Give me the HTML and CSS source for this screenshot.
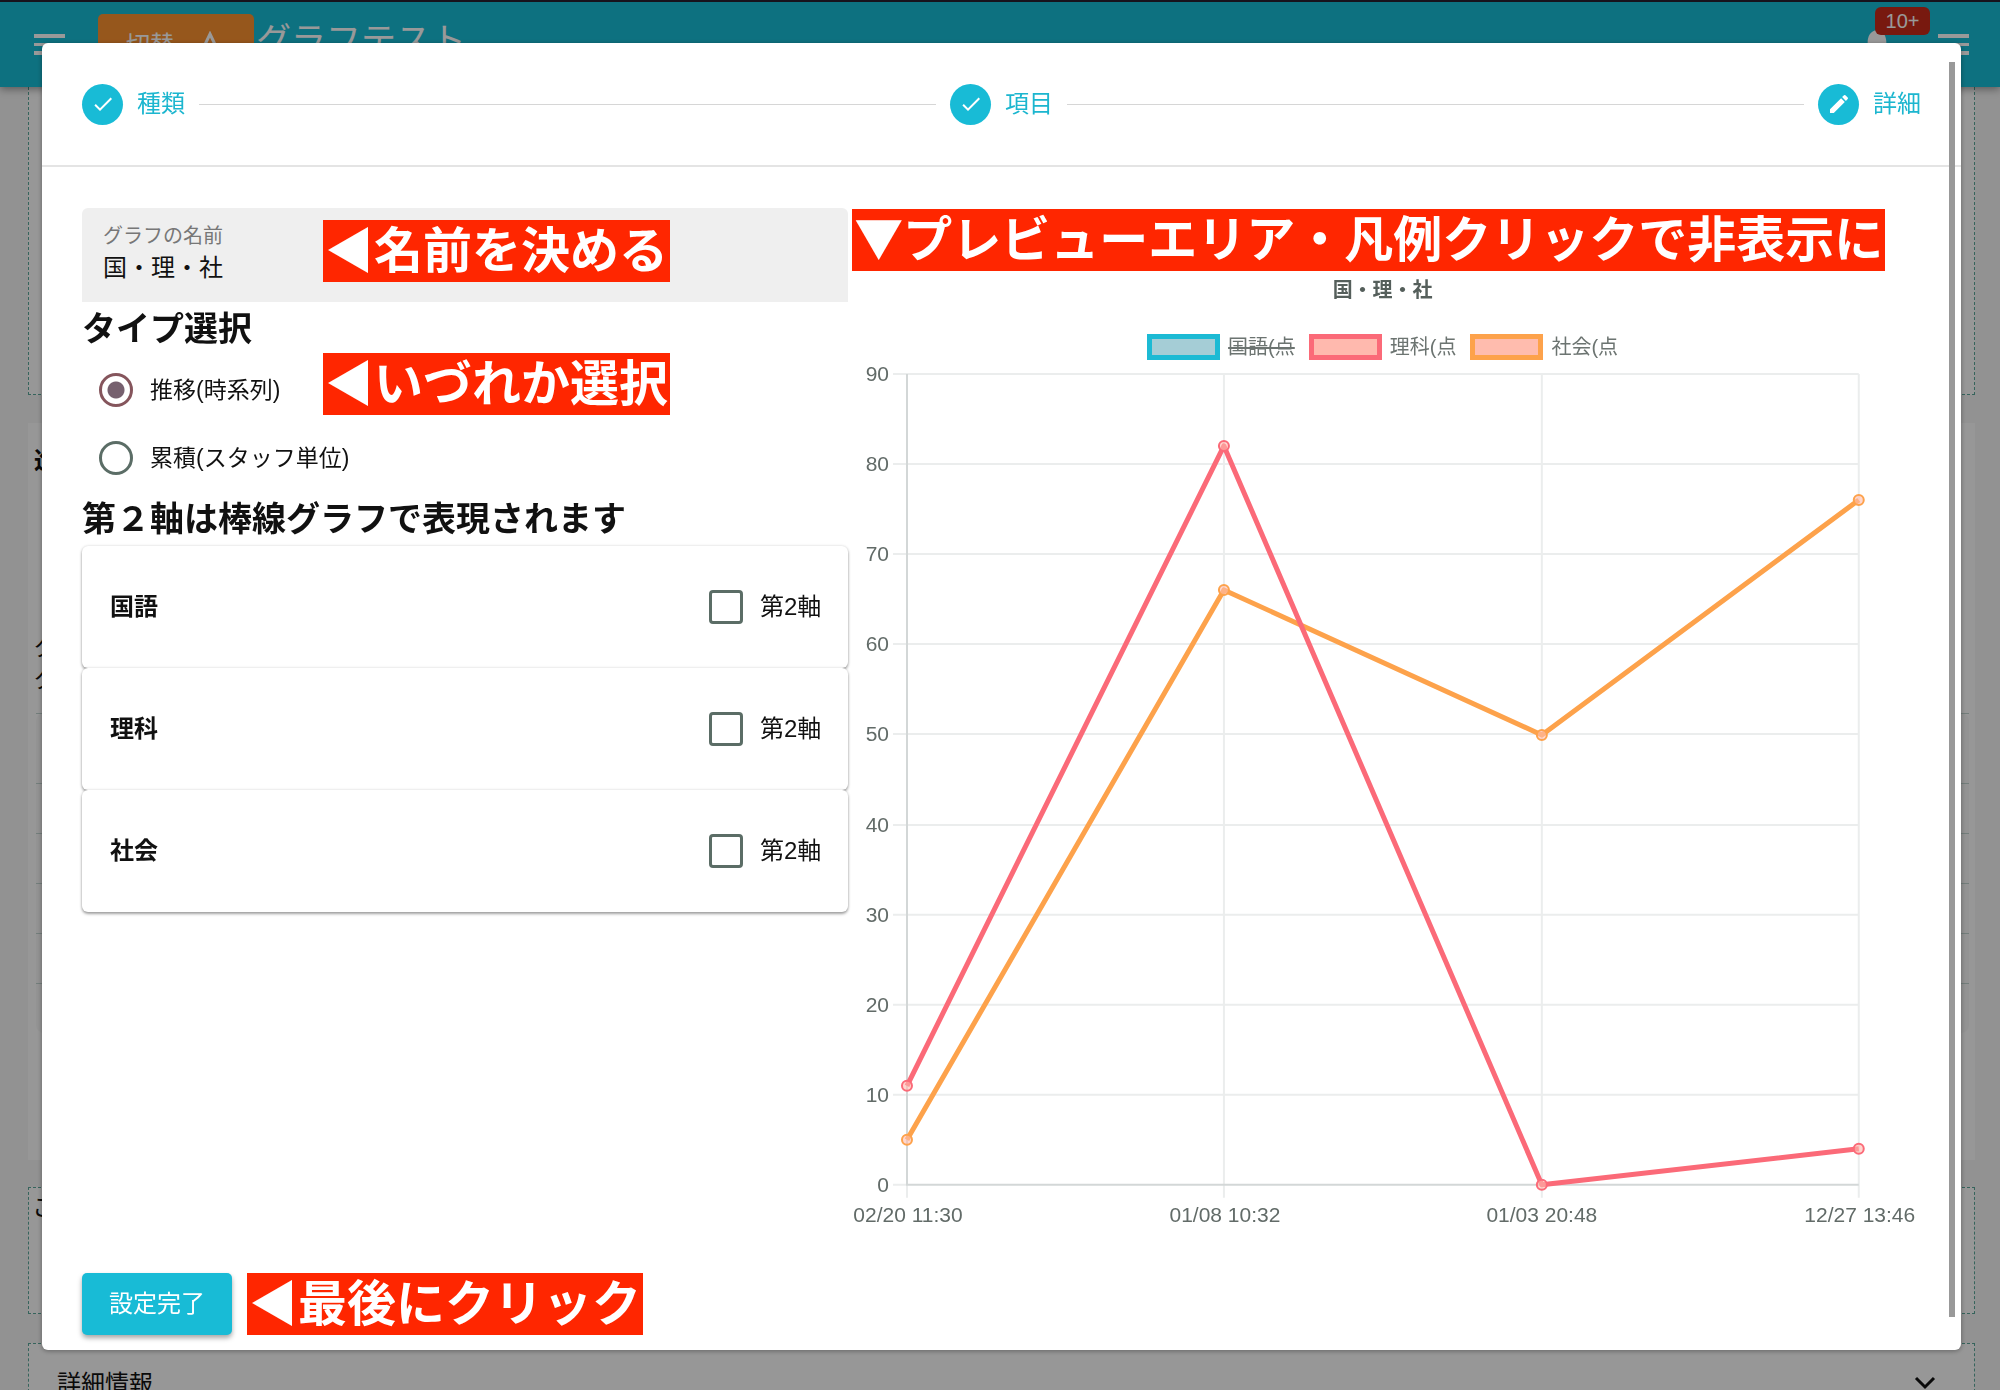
FILE: index.html
```html
<!DOCTYPE html>
<html lang="ja">
<head>
<meta charset="utf-8">
<title>グラフテスト</title>
<link rel="stylesheet" href="styles.css">
</head>
<body>
<div class="page">
  <header class="appbar">
    <button class="icon-button" aria-label="メニュー"><span class="bars"></span></button>
    <button class="switch-button">切替
      <svg width="28" height="28" viewBox="0 0 28 28" aria-hidden="true"><path d="M14 3 24 24H4Z" fill="none" stroke="#fff" stroke-width="3"/></svg>
    </button>
    <h1 class="app-title">グラフテスト</h1>
    <div class="bell">
      <svg width="32" height="32" viewBox="0 0 24 24" aria-hidden="true"><path d="M12 22a2 2 0 0 0 2-2h-4a2 2 0 0 0 2 2zm7-6V10c0-4-2-9-7-9s-7 5-7 9v6l-2 2v1h18v-1z" fill="#fff"/></svg>
      <span class="badge">10+</span>
    </div>
    <button class="icon-button" aria-label="設定"><span class="bars"></span></button>
  </header>
  <main class="sections">
    <section class="section outlined first"></section>
    <section class="section plain">
      <h2 class="section-mark">進</h2>
      <p class="section-note">グ<br>グ</p>
      <div class="list"><i></i><i></i><i></i><i></i><i></i><i></i></div>
    </section>
    <section class="section outlined third"><p>こ</p></section>
    <section class="section outlined details">
      <p>詳細情報</p>
      <svg width="22" height="14" viewBox="0 0 22 14" aria-hidden="true"><path d="M2 2 11 11 20 2" fill="none" stroke="#111" stroke-width="3"/></svg>
    </section>
  </main>
</div>

<div class="overlay">
  <div class="dialog" role="dialog" aria-label="グラフ設定">
    <ol class="stepper">
      <li class="step">
        <span class="step-icon"><svg width="24" height="24" viewBox="0 0 24 24" aria-hidden="true"><path d="M9 16.2 4.8 12l-1.4 1.4L9 19 21 7l-1.4-1.4z" fill="#fff"/></svg></span>
        <span>種類</span>
      </li>
      <li class="step-line" aria-hidden="true"></li>
      <li class="step">
        <span class="step-icon"><svg width="24" height="24" viewBox="0 0 24 24" aria-hidden="true"><path d="M9 16.2 4.8 12l-1.4 1.4L9 19 21 7l-1.4-1.4z" fill="#fff"/></svg></span>
        <span>項目</span>
      </li>
      <li class="step-line" aria-hidden="true"></li>
      <li class="step">
        <span class="step-icon"><svg width="24" height="24" viewBox="0 0 24 24" aria-hidden="true"><path d="M3 17.2V21h3.8L17.8 9.9l-3.7-3.7zM20.7 7a1 1 0 0 0 0-1.4l-2.3-2.3a1 1 0 0 0-1.4 0l-1.9 1.8 3.8 3.8z" fill="#fff"/></svg></span>
        <span>詳細</span>
      </li>
    </ol>

    <div class="content">
      <form class="settings">
        <div class="field">
          <label for="graph-name">グラフの名前</label>
          <input id="graph-name" type="text" value="国・理・社">
          <span class="note note-name">◀名前を決める</span>
        </div>
        <h2 class="heading">タイプ選択</h2>
        <div class="option">
          <input id="type-time" type="radio" name="type" checked>
          <label for="type-time">推移(時系列)</label>
          <span class="note note-type">◀いづれか選択</span>
        </div>
        <div class="option">
          <input id="type-sum" type="radio" name="type">
          <label for="type-sum">累積(スタッフ単位)</label>
        </div>
        <h2 class="heading">第２軸は棒線グラフで表現されます</h2>
        <ul class="axis-list">
          <li class="axis-row"><strong>国語</strong><label><input type="checkbox">第2軸</label></li>
          <li class="axis-row"><strong>理科</strong><label><input type="checkbox">第2軸</label></li>
          <li class="axis-row"><strong>社会</strong><label><input type="checkbox">第2軸</label></li>
        </ul>
      </form>

      <section class="preview">
        <span class="note note-preview">▼プレビューエリア・凡例クリックで非表示に</span>
        <h3 class="chart-title">国・理・社</h3>
        <div class="legend">
          <button class="legend-item off"><span class="swatch teal"></span><span>国語(点</span></button>
          <button class="legend-item"><span class="swatch red"></span><span>理科(点</span></button>
          <button class="legend-item"><span class="swatch orange"></span><span>社会(点</span></button>
        </div>
        <svg class="chart" viewBox="0 0 1073 870" role="img" aria-label="国・理・社">
          <path class="grid" d="M45 14H1011M45 104H1011M45 194H1011M45 284H1011M45 374H1011M45 465H1011M45 555H1011M45 645H1011M45 735H1011M45 825H59M376 14V838M694 14V838M1011 14V838M59 825V838"/>
          <path class="axis" d="M59 14V825H1011"/>
          <g class="ticks-y">
            <text x="41" y="21">90</text><text x="41" y="111">80</text><text x="41" y="201">70</text><text x="41" y="291">60</text><text x="41" y="381">50</text><text x="41" y="472">40</text><text x="41" y="562">30</text><text x="41" y="652">20</text><text x="41" y="742">10</text><text x="41" y="832">0</text>
          </g>
          <g class="ticks-x">
            <text x="60" y="862">02/20 11:30</text><text x="377" y="862">01/08 10:32</text><text x="694" y="862">01/03 20:48</text><text x="1012" y="862">12/27 13:46</text>
          </g>
          <g class="series orange-series">
            <polyline points="59,780 376,230 694,375 1011,140"/>
            <circle cx="59" cy="780" r="5"/><circle cx="376" cy="230" r="5"/><circle cx="694" cy="375" r="5"/><circle cx="1011" cy="140" r="5"/>
          </g>
          <g class="series red-series">
            <polyline points="59,726 376,86 694,825 1011,789"/>
            <circle cx="59" cy="726" r="5"/><circle cx="376" cy="86" r="5"/><circle cx="694" cy="825" r="5"/><circle cx="1011" cy="789" r="5"/>
          </g>
        </svg>
      </section>
    </div>

    <footer class="actions">
      <button class="primary">設定完了</button>
      <span class="note">◀最後にクリック</span>
    </footer>
    <span class="scrollbar" aria-hidden="true"></span>
  </div>
</div>
</body>
</html>
```
FILE: styles.css
```css
* { box-sizing: border-box; }

body {
  margin: 0;
  background: #f3f3f3;
  color: #111;
  font: 24px/36px "Liberation Sans", "Noto Sans CJK JP", sans-serif;
}
h1, h2, h3, p, ul, ol { margin: 0; padding: 0; }
ul, ol { list-style: none; }
button, input { font: inherit; color: inherit; margin: 0; }
button { border: 0; padding: 0; background: none; }

/* page under the dialog */
.page { height: 100vh; overflow: hidden; }
.appbar {
  display: flex;
  align-items: center;
  height: 87px;
  padding: 2px 31px 0 34px;
  background: #17bcd5;
  color: #fff;
  box-shadow: 0 2px 8px rgba(0, 0, 0, .4);
  position: relative;
}
.icon-button { width: 31px; height: 22px; }
.bars {
  display: block;
  height: 21px;
  border-top: 4px solid #fff;
  border-bottom: 4px solid #fff;
  background: linear-gradient(#fff, #fff) center / 100% 3px no-repeat;
}
.switch-button {
  display: flex;
  align-items: center;
  gap: 22px;
  height: 62px;
  width: 156px;
  margin: 0 2px 0 33px;
  padding: 0 28px;
  border-radius: 5px;
  background: #fb912f;
}
.app-title {
  flex: 1;
  padding-bottom: 8px;
  font-size: 35px;
  font-weight: 400;
  line-height: 48px;
}
.bell { position: relative; display: flex; margin-right: 45px; }
.badge {
  position: absolute;
  left: 14px;
  top: -22px;
  width: 55px;
  height: 28px;
  border-radius: 6px;
  background: #c92a1a;
  font-size: 20px;
  line-height: 28px;
  text-align: center;
}
.sections { padding: 0 25px 0 28px; }
.section { background: #fcfcfc; }
.outlined { border: 1px dashed #5aa79a; }
.first { height: 308px; border-top: 0; }
.plain { height: 737px; margin: 28px 0 27px; padding: 18px 6px 0; }
.section-mark { font-size: 24px; line-height: 40px; }
.section-note { padding-top: 150px; line-height: 32px; }
.list { margin: 18px 0 0 2px; border-radius: 8px; background: #f5f5f5; }
.list i { display: block; height: 50px; border-top: 1px solid #c0d2ce; }
.list i:first-child { height: 70px; }
.third { height: 127px; padding: 2px 3px; }
.details {
  display: flex;
  justify-content: space-between;
  margin-top: 29px;
  padding: 22px 38px 40px 28px;
}
.details svg { margin-top: 10px; }

/* dialog */
.overlay {
  position: fixed;
  inset: 0;
  display: flex;
  padding: 41px 39px 40px 42px;
  border-top: 2px solid #17131c;
  background: rgba(0, 0, 0, .4);
}
.dialog {
  position: relative;
  flex: 1;
  display: flex;
  flex-direction: column;
  border-radius: 6px;
  background: #fff;
  box-shadow: 0 1px 5px rgba(0, 0, 0, .35);
}
.stepper {
  display: flex;
  align-items: center;
  gap: 14px;
  height: 124px;
  padding: 0 40px;
  border-bottom: 2px solid #e4e4e4;
  color: #1cb6cf;
}
.step { display: flex; align-items: center; gap: 14px; }
.step-icon {
  display: grid;
  place-items: center;
  width: 41px;
  height: 41px;
  border-radius: 50%;
  background: #18bbd6;
}
.step-line { flex: 1; height: 1px; background: #d6d6d6; }

.content {
  display: grid;
  grid-template-columns: 5fr 7fr;
  padding: 41px 40px 0;
}
.field {
  position: relative;
  display: flex;
  flex-direction: column;
  height: 94px;
  padding: 14px 21px;
  border-radius: 6px 6px 0 0;
  background: #efefef;
}
.field label { color: #777; font-size: 20px; line-height: 28px; }
.field input { height: 36px; padding: 0; border: 0; outline: 0; background: none; }

.heading { font-size: 34px; line-height: 54px; }

.option {
  position: relative;
  display: flex;
  align-items: center;
  gap: 17px;
  height: 68px;
  padding-left: 17px;
  font-size: 23px;
}
.option input {
  appearance: none;
  width: 34px;
  height: 34px;
  border: 3px solid #5b6d66;
  border-radius: 50%;
}
.option input:checked {
  border-color: #85555c;
  background: radial-gradient(circle, #76606e 8px, transparent 9px);
}

.axis-row {
  display: flex;
  align-items: center;
  justify-content: space-between;
  height: 122px;
  padding: 0 27px 0 28px;
  border-radius: 6px;
  background: #fff;
  box-shadow: 0 2px 3px rgba(0, 0, 0, .35), 0 0 3px rgba(0, 0, 0, .15);
}
.axis-row label { display: flex; align-items: center; gap: 17px; }
.axis-row input {
  appearance: none;
  width: 34px;
  height: 34px;
  border: 3px solid #5b6d66;
  border-radius: 4px;
}

.preview { position: relative; padding-top: 68px; }
.chart-title {
  padding-right: 4px;
  color: #555f5b;
  font-size: 20px;
  line-height: 28px;
  text-align: center;
}
.legend {
  display: flex;
  justify-content: center;
  gap: 14px;
  margin-top: 30px;
  padding-right: 4px;
}
.legend-item {
  display: flex;
  align-items: center;
  gap: 8px;
  height: 26px;
  color: #6c7471;
  font-size: 20px;
  line-height: 26px;
}
.off { text-decoration: line-through 2px; }
.swatch { width: 73px; height: 26px; border: 5px solid; }
.teal { border-color: #1cbad4; background: #a5cdd6; }
.red { border-color: #fb6a78; background: #ffb9ae; }
.orange { border-color: #fda24b; background: #ffbcae; }

.chart { display: block; width: 100%; height: auto; }
.grid { fill: none; stroke: #ebeded; stroke-width: 2; }
.axis { fill: none; stroke: #d3d7d7; stroke-width: 2; }
.chart text { fill: #626b68; font-size: 21px; }
.ticks-y { text-anchor: end; }
.ticks-x { text-anchor: middle; }
.series polyline { fill: none; stroke-width: 5; stroke-linejoin: round; }
.series circle { stroke-width: 2; fill-opacity: .6; }
.orange-series { stroke: #fda24b; fill: #ffbcae; }
.red-series { stroke: #fb6a78; fill: #ffb9ae; }

.actions {
  display: flex;
  align-items: center;
  gap: 15px;
  margin-top: auto;
  padding: 0 40px 15px;
}
.primary {
  width: 150px;
  height: 62px;
  border-radius: 5px;
  background: #18bbd6;
  color: #fff;
  box-shadow: 0 3px 5px rgba(0, 0, 0, .35);
}

/* red callouts */
.note {
  padding: 0 2px 8px;
  background: #ff2600;
  color: #fff;
  font: bold 49px/54px "Noto Sans CJK JP", sans-serif;
  white-space: nowrap;
}
.note-name { position: absolute; left: 241px; top: 12px; }
.note-type { position: absolute; left: 241px; top: -3px; }
.note-preview { position: absolute; left: 4px; top: 1px; }

.scrollbar {
  position: absolute;
  top: 19px;
  right: 6px;
  bottom: 33px;
  width: 6px;
  background: #999;
}
```
